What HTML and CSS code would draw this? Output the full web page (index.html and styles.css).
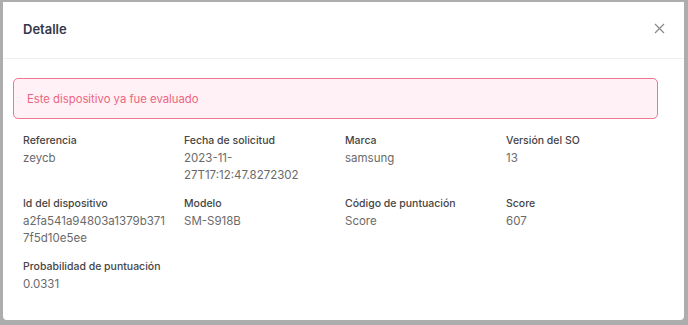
FILE: index.html
```html
<!DOCTYPE html>
<html lang="es">
<head>
    <meta charset="UTF-8">
    <meta name="viewport" content="width=device-width, initial-scale=1.0">
    <title>Detalle</title>
    <link rel="stylesheet" href="styles.css">
</head>
<body>
    <div class="modal">
        <div class="modal-header">
            <h1>Detalle</h1>
            <button class="close" aria-label="Cerrar">
                <svg width="11" height="11" viewBox="0 0 11 11">
                    <path d="M1 1 L10 10 M10 1 L1 10" stroke="#8a8a8a" stroke-width="1.2" fill="none"/>
                </svg>
            </button>
        </div>

        <div class="modal-body">
            <div class="alert">Este dispositivo ya fue evaluado</div>

            <div class="details">
                <div class="field">
                    <span class="label">Referencia</span>
                    <span class="value">zeycb</span>
                </div>
                <div class="field">
                    <span class="label">Fecha de solicitud</span>
                    <span class="value">2023-11-<br>27T17:12:47.8272302</span>
                </div>
                <div class="field">
                    <span class="label">Marca</span>
                    <span class="value">samsung</span>
                </div>
                <div class="field">
                    <span class="label">Versión del SO</span>
                    <span class="value">13</span>
                </div>

                <div class="field">
                    <span class="label">Id del dispositivo</span>
                    <span class="value">a2fa541a94803a1379b371<br>7f5d10e5ee</span>
                </div>
                <div class="field">
                    <span class="label">Modelo</span>
                    <span class="value">SM-S918B</span>
                </div>
                <div class="field">
                    <span class="label">Código de puntuación</span>
                    <span class="value">Score</span>
                </div>
                <div class="field">
                    <span class="label">Score</span>
                    <span class="value">607</span>
                </div>

                <div class="field">
                    <span class="label">Probabilidad de puntuación</span>
                    <span class="value">0.0331</span>
                </div>
            </div>
        </div>
    </div>
</body>
</html>
```

FILE: styles.css
```css
*{
    margin: 0;
    padding: 0;
    box-sizing: border-box;

    font-family: Inter, "Noto Sans", sans-serif;
}

body{
    width: 688px;
    height: 325px;
    padding: 2px 4px 5px 3px;
    background-color: #adadad;
    overflow: hidden;
}

.modal{
    display: flex;
    flex-direction: column;

    height: 100%;
    background-color: #fff;
    border-radius: 0 0 4px 4px;
}

.modal-header{
    display: flex;
    justify-content: space-between;
    align-items: center;

    height: 57px;
    padding: 0 19px 0 20px;
    border-bottom: 1px solid #efefef;

    h1{
        font-size: 13px;
        font-weight: 600;
        color: #34374a;
        margin-top: -3px;
    }

    .close{
        display: flex;
        background: none;
        border: none;
        cursor: pointer;
        margin-top: -3px;
    }
}

.modal-body{
    padding: 19px 26px 0 10px;
}

.alert{
    display: flex;
    align-items: center;

    height: 41px;
    padding: 0 13px;
    border: 1.5px solid #f07590;
    border-radius: 5px;
    background-color: #fff1f5;

    font-size: 11.3px;
    color: #ec6682;
}

.details{
    display: grid;
    grid-template-columns: repeat(4, 161px);
    grid-auto-rows: 51px;
    row-gap: 12px;

    margin-top: 14px;
    padding-left: 10px;
}

.field{
    display: flex;
    flex-direction: column;

    .label{
        font-size: 10.5px;
        font-weight: 500;
        line-height: 16px;
        color: #454545;
    }

    .value{
        margin-top: 1px;
        font-size: 11.5px;
        line-height: 16.5px;
        color: #6a6a6a;
    }
}
```
